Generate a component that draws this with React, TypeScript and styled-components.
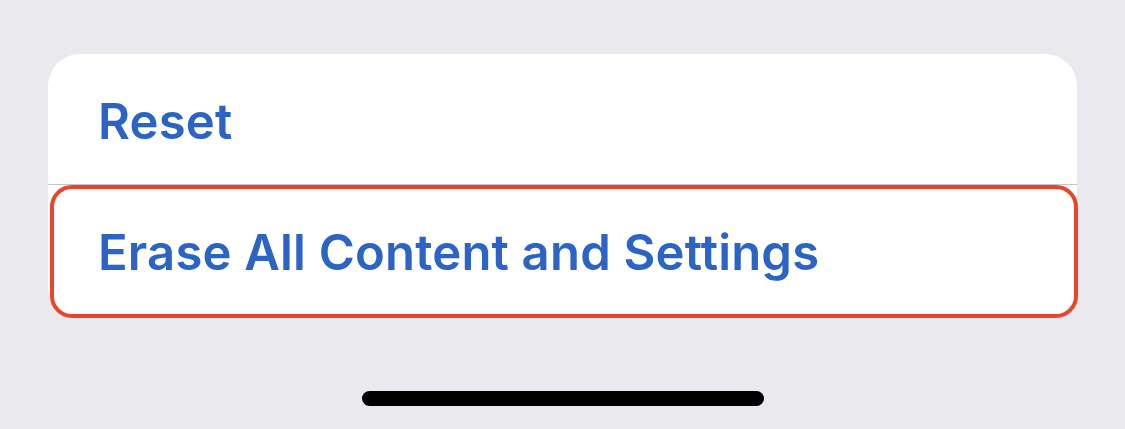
import React from "react";
import styled, { createGlobalStyle } from "styled-components";

const Global = createGlobalStyle`
  html, body { margin: 0; padding: 0; background: #e9e9ee; }
  body { font-family: Inter, "Noto Sans", sans-serif; }
`;

const Screen = styled.div`
  width: 1125px;
  height: 429px;
  background: #e9e9ee;
  display: flex;
  flex-direction: column;
  align-items: center;
  padding-top: 54px;
  box-sizing: border-box;
`;

const Card = styled.div`
  width: 1029px;
  background: #ffffff;
  border-radius: 32px;
  display: flex;
  flex-direction: column;
`;

const Row = styled.div<{ $highlight?: boolean }>`
  height: ${(p) => (p.$highlight ? "133px" : "131px")};
  box-sizing: border-box;
  display: flex;
  align-items: center;
  padding-left: ${(p) => (p.$highlight ? "44px" : "50px")};
  padding-top: ${(p) => (p.$highlight ? "2px" : "5px")};
  border: ${(p) => (p.$highlight ? "4px solid #e8462c" : "none")};
  border-bottom: ${(p) => (p.$highlight ? "4px solid #e8462c" : "1px solid #c6c6c8")};
  border-radius: ${(p) => (p.$highlight ? "22px" : "0")};
  margin: ${(p) => (p.$highlight ? "0 -1px 0 2px" : "0")};
`;

const Label = styled.span`
  font-size: 49px;
  font-weight: 600;
  color: #2b64c4;
  letter-spacing: 0.2px;
`;

const HomeBar = styled.div`
  width: 402px;
  height: 15px;
  border-radius: 8px;
  background: #000;
  margin-top: 73px;
`;

export default function App() {
  return (
    <>
      <Global />
      <Screen>
        <Card>
          <Row>
            <Label>Reset</Label>
          </Row>
          <Row $highlight>
            <Label>Erase All Content and Settings</Label>
          </Row>
        </Card>
        <HomeBar />
      </Screen>
    </>
  );
}
